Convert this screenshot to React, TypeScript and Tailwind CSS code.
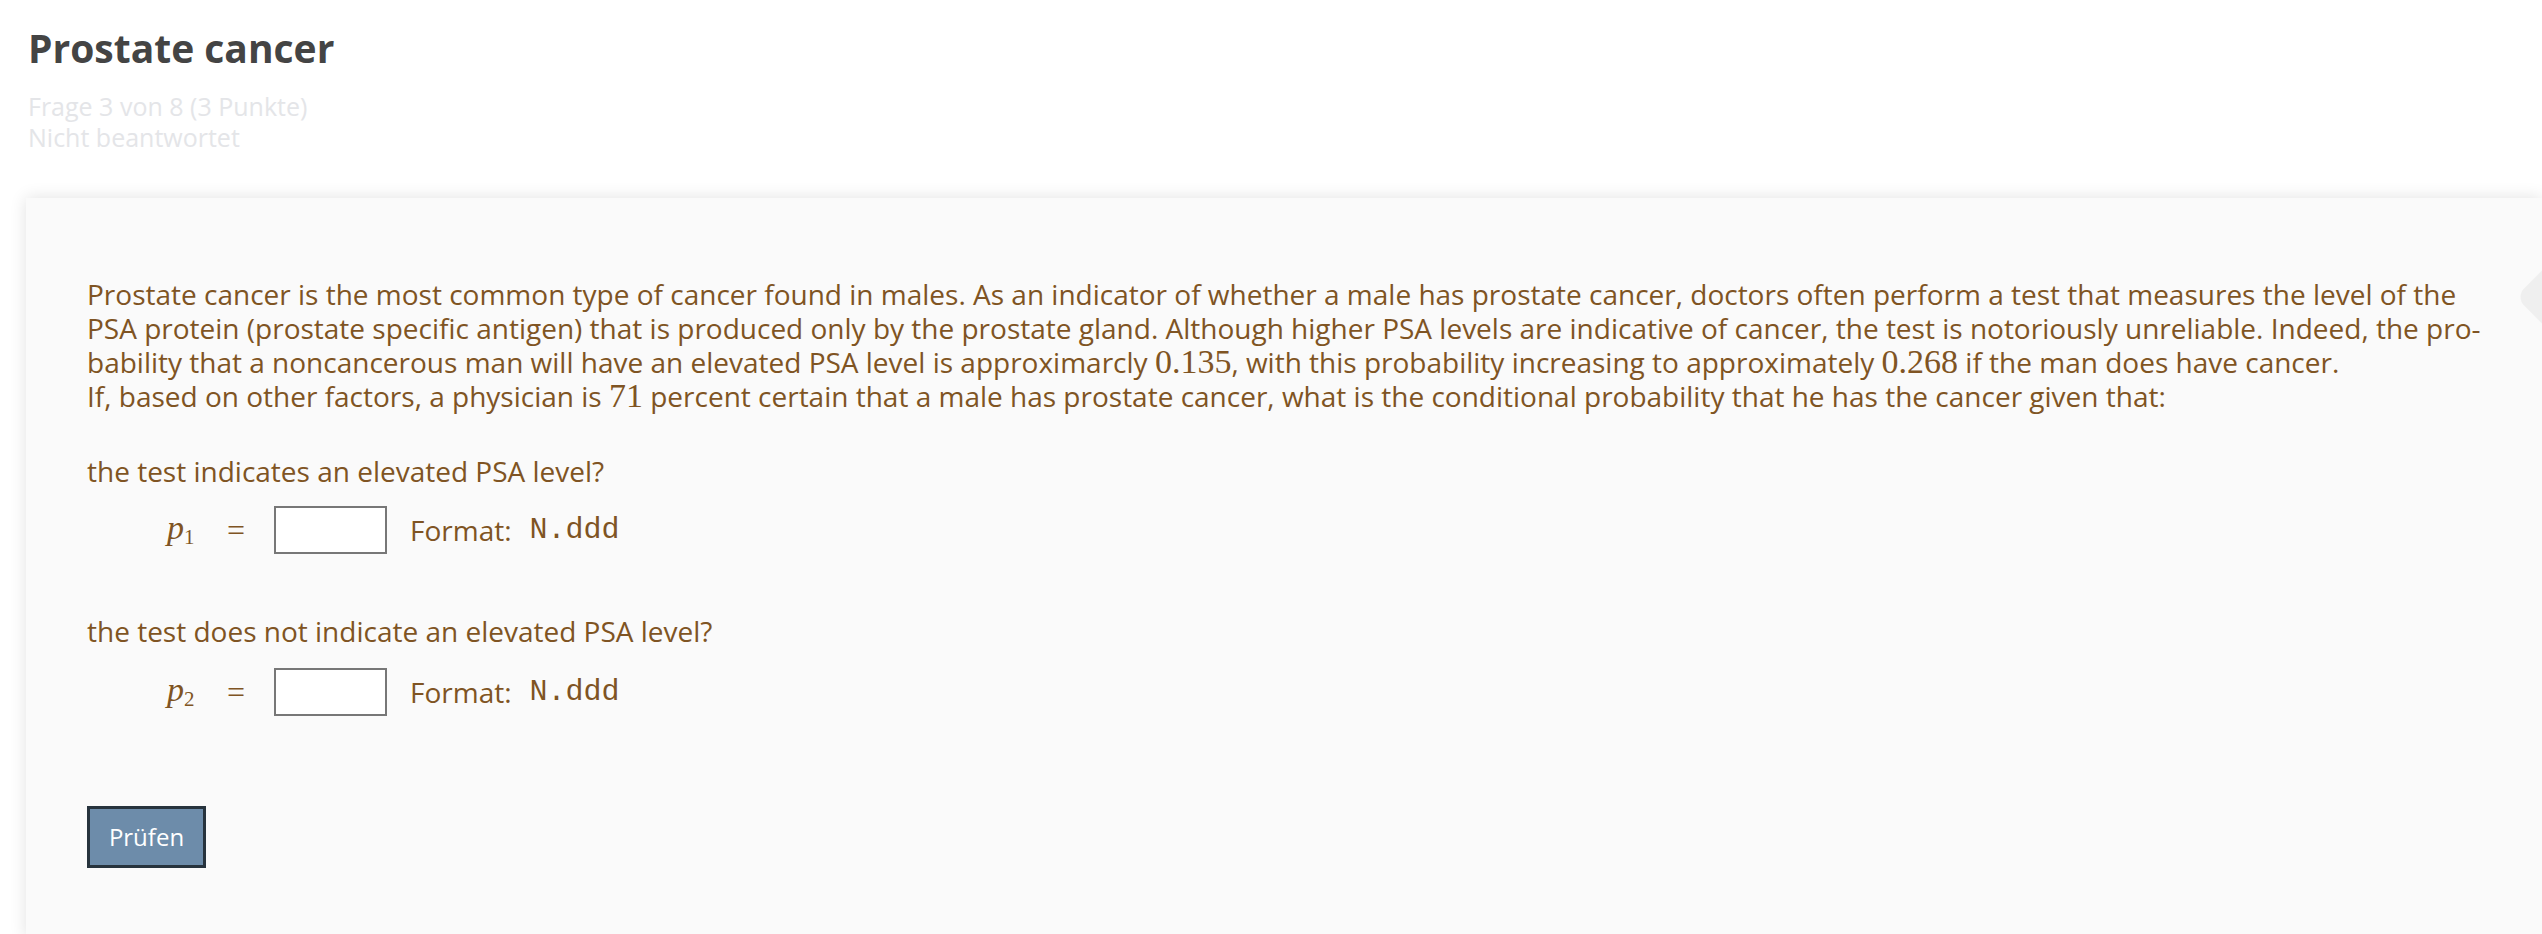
import React from "react";

const MathNum = ({ children }: { children: React.ReactNode }) => (
  <span className="font-['Liberation_Serif',serif] text-[34px]">{children}</span>
);

const AnswerRow = ({ sub }: { sub: string }) => (
  <div className="flex items-center h-[48px] pl-[80px]">
    <span className="w-[60px] font-['Liberation_Serif',serif] italic text-[34px] leading-none">
      p<span className="not-italic text-[21px] align-[-0.25em]">{sub}</span>
    </span>
    <span className="w-[47px] font-['Liberation_Serif',serif] text-[32px] leading-none">=</span>
    <input
      type="text"
      className="w-[113px] h-[48px] bg-white border-2 border-[#777777] outline-none"
    />
    <span className="ml-[23px]">Format:</span>
    <span className="ml-[18px] font-['Liberation_Mono',monospace] text-[30px]">N.ddd</span>
  </div>
);

export default function App() {
  return (
    <div className="relative min-h-screen bg-white overflow-hidden font-['Open_Sans',sans-serif]">
      <div className="pl-[28px] pt-[24px]">
        <h1 className="text-[39px] leading-[48px] font-bold text-[#444444]">Prostate cancer</h1>
        <div className="mt-[19px] text-[25px] leading-[31px] text-[#e4e5e8]">
          <div>Frage 3 von 8 (3 Punkte)</div>
          <div>Nicht beantwortet</div>
        </div>
      </div>

      <div className="ml-[26px] mt-[45px] min-h-[740px] bg-[#fafafa] shadow-[0_0_16px_rgba(0,0,0,0.12)] pl-[61px] pt-[79px] pb-[60px] text-[28px] leading-[34px] text-[#7f5423]">
        <p className="whitespace-nowrap">
          Prostate cancer is the most common type of cancer found in males. As an indicator of whether a male has prostate cancer, doctors often perform a test that measures the level of the
          <br />
          PSA protein (prostate specific antigen) that is produced only by the prostate gland. Although higher PSA levels are indicative of cancer, the test is notoriously unreliable. Indeed, the pro-
          <br />
          bability that a noncancerous man will have an elevated PSA level is approximarcly <MathNum>0.135</MathNum>, with this probability increasing to approximately <MathNum>0.268</MathNum> if the man does have cancer.
          <br />
          If, based on other factors, a physician is <MathNum>71</MathNum> percent certain that a male has prostate cancer, what is the conditional probability that he has the cancer given that:
        </p>

        <p className="mt-[41px]">the test indicates an elevated PSA level?</p>
        <div className="mt-[18px]">
          <AnswerRow sub="1" />
        </div>

        <p className="mt-[60px]">the test does not indicate an elevated PSA level?</p>
        <div className="mt-[20px]">
          <AnswerRow sub="2" />
        </div>

        <button className="mt-[90px] w-[119px] h-[62px] bg-[#6d8caa] border-[3px] border-[#27333d] text-white text-[24px] leading-none">
          Prüfen
        </button>
      </div>

      <div className="absolute right-[-46px] top-[267px] w-[60px] h-[60px] rotate-45 rounded-[12px] bg-[#efefef]" />
    </div>
  );
}
